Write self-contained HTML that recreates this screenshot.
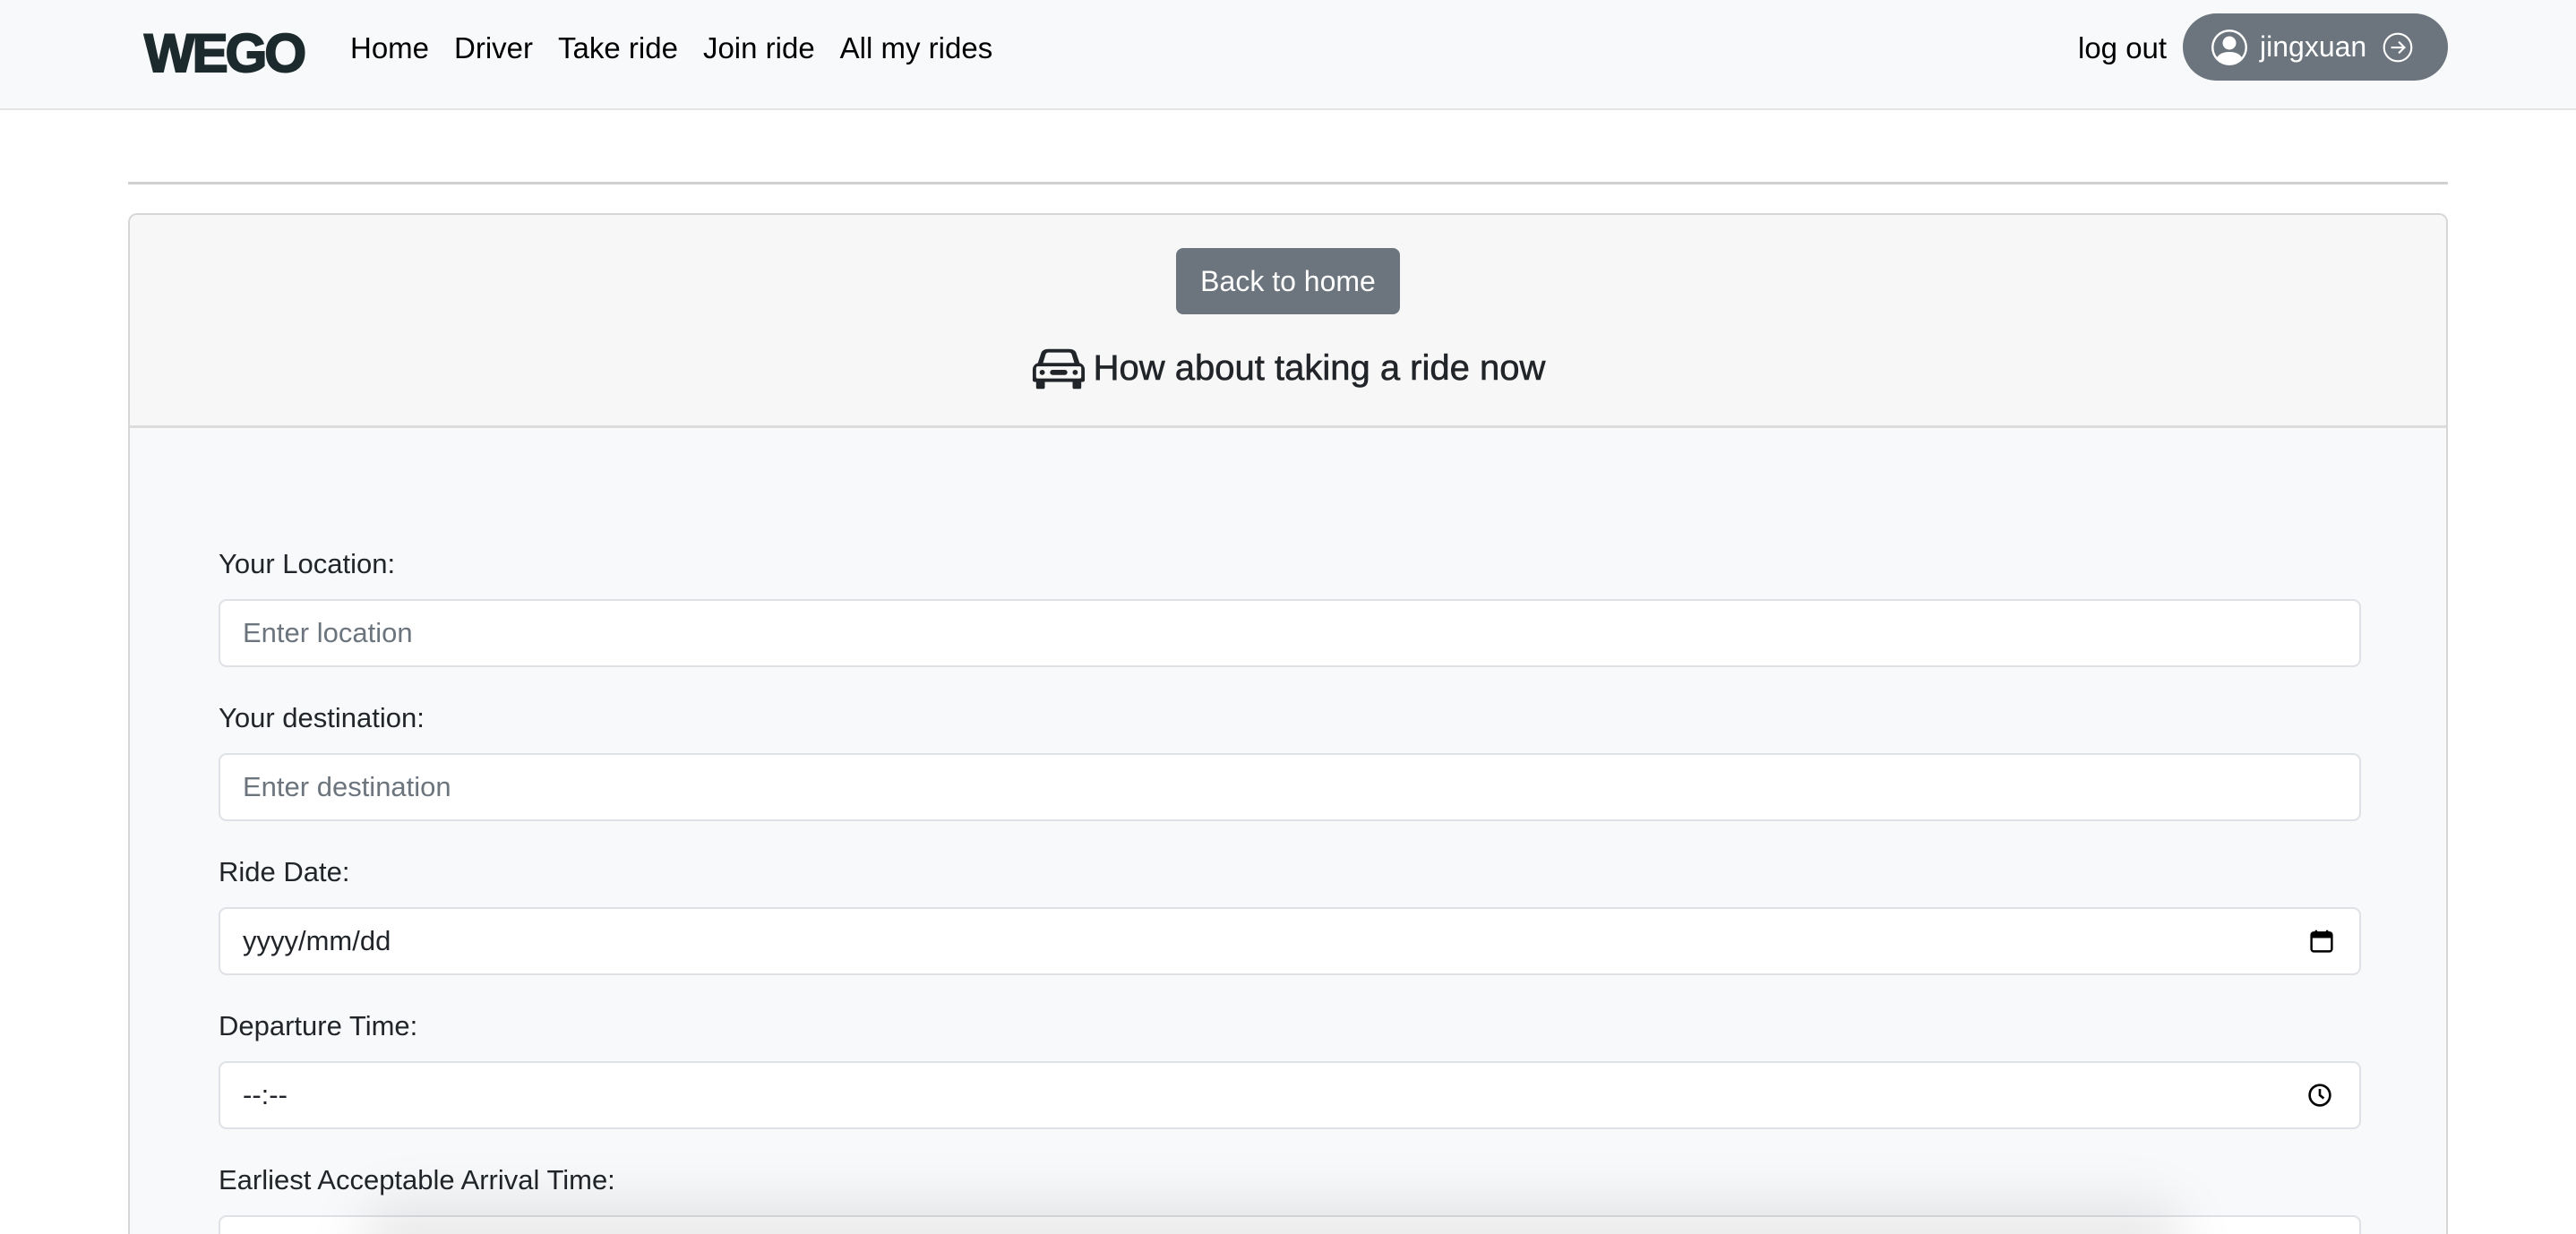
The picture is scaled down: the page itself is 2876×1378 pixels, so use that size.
<!DOCTYPE html>
<html style="width:2876px;height:1378px;overflow:hidden"><head><meta charset="utf-8"><style>
*{box-sizing:border-box;margin:0;padding:0}
body{width:2876px;height:1378px;overflow:hidden;background:#fff;font-family:"Liberation Sans",sans-serif;color:#212529;position:relative}
.nav{position:absolute;left:0;top:0;width:2876px;height:123px;background:#f8f9fa;border-bottom:2px solid #e3e4e6}
.logo{position:absolute;left:161px;top:30px;font-weight:900;font-size:60px;letter-spacing:-3px;color:#1c2a2e;line-height:60px;-webkit-text-stroke:2px #1c2a2e}
.links{position:absolute;left:391px;top:32px;font-size:33px;line-height:44px;color:#000}
.links span{margin-right:28px}
.logout{position:absolute;left:2320px;top:32px;font-size:33px;line-height:44px;color:#000}
.pill{position:absolute;left:2437px;top:15px;width:296px;height:75px;border-radius:38px;background:#6c757d;color:#fff;font-size:32px;display:flex;align-items:center;padding-left:32px}
.hr{position:absolute;left:143px;top:203px;width:2590px;height:3px;background:#d0d0d0}
.card{position:absolute;left:143px;top:238px;width:2590px;height:1140px;border:2px solid #d6d6d6;border-bottom:none;border-radius:10px 10px 0 0;background:#f8f9fa;overflow:hidden}
.ch{height:238px;background:#f7f7f7;border-bottom:3px solid #dcdcdc;position:relative}
.btn{position:absolute;left:1168px;top:37px;width:250px;height:74px;background:#6c757d;color:#fff;border-radius:8px;font-size:32px;display:flex;align-items:center;justify-content:center}
.h{position:absolute;left:0;right:0;top:146px;text-align:center;font-size:40px;line-height:50px;font-weight:400;-webkit-text-stroke:0.6px #212529;display:flex;justify-content:center;align-items:center;gap:8px}
.lbl{position:absolute;left:99px;font-size:31px;line-height:40px;color:#212529}
.inp{position:absolute;left:99px;width:2392px;height:76px;background:#fff;border:2px solid #dee2e6;border-radius:9px;font-size:31px;line-height:72px;padding-left:25px;color:#6c757d}
.dark{color:#212529}
.shadow{position:absolute;left:400px;top:1340px;width:2040px;height:90px;border-radius:45px;background:rgba(0,0,0,0.08);filter:blur(28px)}
</style></head><body>
<div class="nav">
<div class="logo">WEGO</div>
<div class="links"><span>Home</span><span>Driver</span><span>Take ride</span><span>Join ride</span><span>All my rides</span></div>
<div class="logout">log out</div>
<div class="pill"><svg width="40" height="40" viewBox="0 0 16 16" fill="#fff"><path d="M11 6a3 3 0 1 1-6 0 3 3 0 0 1 6 0"/><path fill-rule="evenodd" d="M0 8a8 8 0 1 1 16 0A8 8 0 0 1 0 8m8-7a7 7 0 0 0-5.468 11.37C3.242 11.226 4.805 10 8 10s4.757 1.225 5.468 2.37A7 7 0 0 0 8 1"/></svg><span style="margin-left:14px">jingxuan</span><svg style="margin-left:18px" width="34" height="34" viewBox="0 0 16 16" fill="none" stroke="#fff" stroke-width="1"><circle cx="8" cy="8" r="7.2"/><path d="M4.5 8h7M8.5 5l3 3-3 3"/></svg></div>
</div>
<div class="hr"></div>
<div class="card">
<div class="ch">
<div class="btn">Back to home</div>
<div class="h"><svg width="62" height="48" viewBox="0 0 32 24"><path d="M6 3 Q7 1 10 1 H22 Q25 1 26 3 L28 9 Q31 10 31 13 V19 Q31 20 29 20 H3 Q1 20 1 19 V13 Q1 10 4 9 Z" fill="#212529"/><path d="M7 9 L8.5 4 Q9 3 10 3 H22 Q23 3 23.5 4 L25 9 Z" fill="#f7f7f7"/><rect x="3" y="11" width="26" height="7" rx="1" fill="#f7f7f7"/><circle cx="6.5" cy="14.5" r="1.5" fill="#212529"/><circle cx="25.5" cy="14.5" r="1.5" fill="#212529"/><rect x="11" y="13" width="10" height="3" rx="1.5" fill="#212529"/><rect x="3" y="19" width="5" height="5" rx="1" fill="#212529"/><rect x="24" y="19" width="5" height="5" rx="1" fill="#212529"/></svg><span>How about taking a ride now</span></div>
</div>
<div class="lbl" style="top:370px">Your Location:</div>
<div class="inp" style="top:429px">Enter location</div>
<div class="lbl" style="top:542px">Your destination:</div>
<div class="inp" style="top:601px">Enter destination</div>
<div class="lbl" style="top:714px">Ride Date:</div>
<div class="inp dark" style="top:773px">yyyy/mm/dd<svg style="position:absolute;right:28px;top:22px" width="28" height="28" viewBox="0 0 16 16"><rect x="1.5" y="2.5" width="13" height="12" rx="1.5" fill="none" stroke="#000" stroke-width="1.4"/><rect x="1.5" y="2.5" width="13" height="3.5" fill="#000"/><path d="M4.5 1v3M11.5 1v3" stroke="#000" stroke-width="1.4"/></svg></div>
<div class="lbl" style="top:886px">Departure Time:</div>
<div class="inp dark" style="top:945px">--:--<svg style="position:absolute;right:30px;top:22px" width="28" height="28" viewBox="0 0 16 16" fill="none" stroke="#000" stroke-width="1.5"><circle cx="8" cy="8" r="6.5"/><path d="M8 4v4l2.5 2"/></svg></div>
<div class="lbl" style="top:1058px">Earliest Acceptable Arrival Time:</div>
<div class="inp dark" style="top:1117px"></div>
</div>
<div class="shadow"></div>
</body></html>
